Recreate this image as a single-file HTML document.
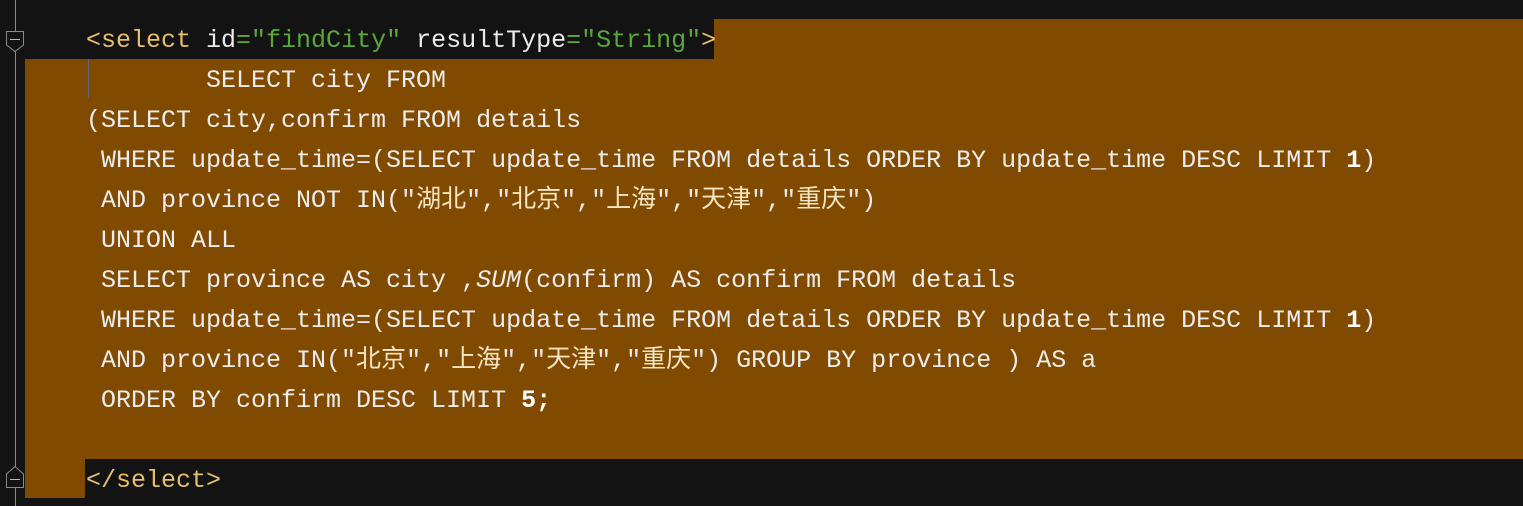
<!DOCTYPE html>
<html><head><meta charset="utf-8"><style>
html,body{margin:0;padding:0;background:#131313;width:1523px;height:506px;overflow:hidden;position:relative}
.sel{position:absolute;background:#804a00}
.l{position:absolute;left:86px;height:40px;line-height:40px;font-family:"Liberation Mono","Noto Sans CJK SC",monospace;font-size:25px;color:#ececec;white-space:pre;margin-top:1px}
.t{color:#e8bf6a}.s{color:#5aa83a}.c{color:#f3e4c4}b{font-weight:bold;color:#fff}i{font-style:italic}
</style></head><body>
<div class="sel" style="left:714px;top:19px;width:809px;height:40px"></div>
<div class="sel" style="left:25px;top:59px;width:1498px;height:400px"></div>
<div class="sel" style="left:25px;top:459px;width:60px;height:39px"></div>
<div style="position:absolute;left:15px;top:0;width:1px;height:506px;background:#8a8a8a"></div>
<div style="position:absolute;left:88px;top:59px;width:1px;height:39px;background:#5a6a8a"></div>
<svg style="position:absolute;left:0;top:0" width="30" height="506">
<path d="M6.5 31.5H23.5V45L15 51.5L6.5 45Z" fill="#131313" stroke="#8a8a8a"/><path d="M10 39.5H20" stroke="#bbb"/>
<path d="M6.5 487.5H23.5V474L15 466.5L6.5 474Z" fill="#131313" stroke="#8a8a8a"/><path d="M10 479.5H20" stroke="#bbb"/>
</svg>
<div class="l" style="top:20px"><span class="t">&lt;select</span> id<span class="s">="findCity"</span> resultType<span class="s">="String"</span><span class="t">&gt;</span></div>
<div class="l" style="top:60px">        SELECT city FROM</div>
<div class="l" style="top:100px">(SELECT city,confirm FROM details</div>
<div class="l" style="top:140px"> WHERE update_time=(SELECT update_time FROM details ORDER BY update_time DESC LIMIT <b>1</b>)</div>
<div class="l" style="top:180px"> AND province NOT IN("<span class="c">湖北</span>","<span class="c">北京</span>","<span class="c">上海</span>","<span class="c">天津</span>","<span class="c">重庆</span>")</div>
<div class="l" style="top:220px"> UNION ALL</div>
<div class="l" style="top:260px"> SELECT province AS city ,<i>SUM</i>(confirm) AS confirm FROM details</div>
<div class="l" style="top:300px"> WHERE update_time=(SELECT update_time FROM details ORDER BY update_time DESC LIMIT <b>1</b>)</div>
<div class="l" style="top:340px"> AND province IN("<span class="c">北京</span>","<span class="c">上海</span>","<span class="c">天津</span>","<span class="c">重庆</span>") GROUP BY province ) AS a</div>
<div class="l" style="top:380px"> ORDER BY confirm DESC LIMIT <b>5;</b></div>
<div class="l" style="top:460px"><span class="t">&lt;/select&gt;</span></div>
</body></html>
